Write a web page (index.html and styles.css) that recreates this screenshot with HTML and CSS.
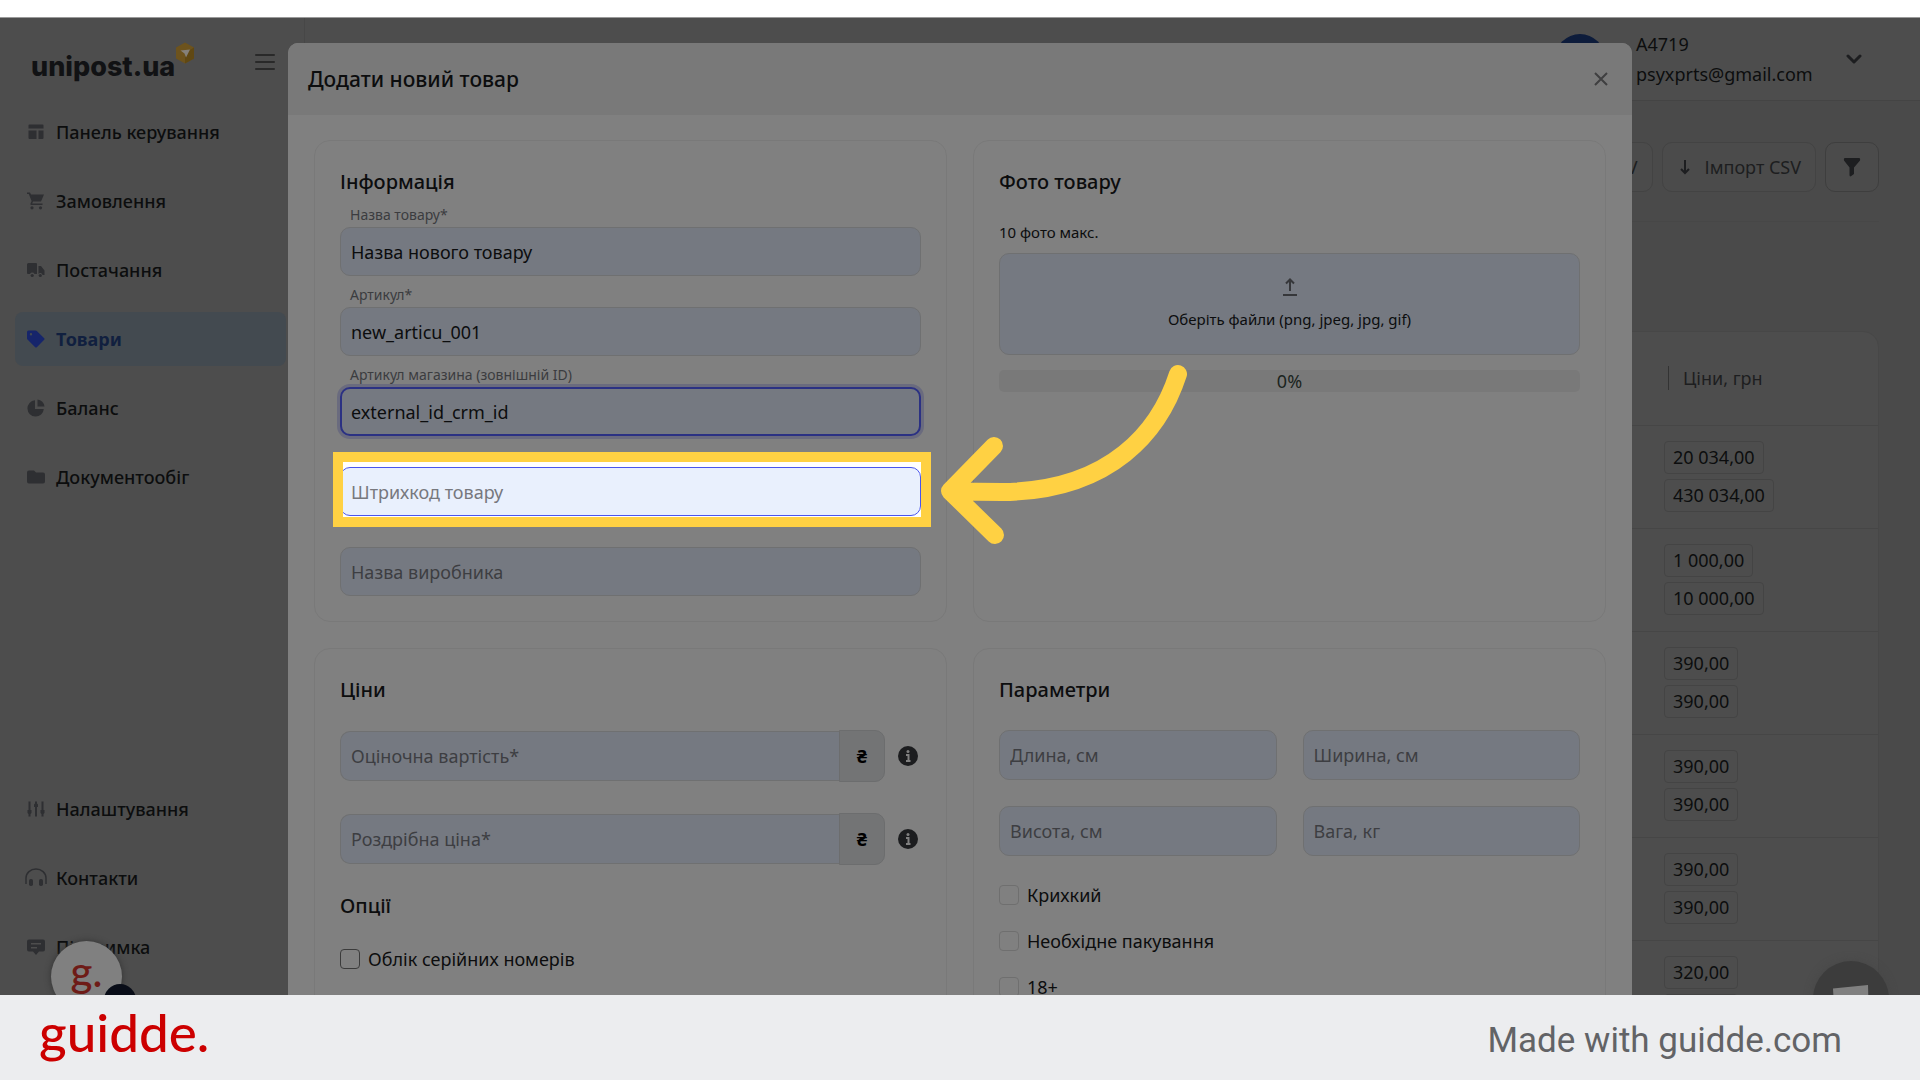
FILE: index.html
```html
<!DOCTYPE html>
<html lang="uk">
<head>
<meta charset="utf-8">
<meta name="viewport" content="width=device-width, initial-scale=1">
<title>Додати новий товар</title>
<link rel="stylesheet" href="styles.css">
</head>
<body>
<div class="stage">
  <div class="app">
    <aside class="sidebar">
      <div class="brand">
        <a class="brand-name" href="#">unipost.ua<svg class="brand-mark" viewBox="0 0 20 22" width="20" height="22"><path d="M10 0.500 19 5.500V16.500L10 21.500 1 16.500V5.500Z" fill="#6d531d"/><path d="M10 11 19 5.500V16.500L10 21.500Z" fill="#604813"/><path d="M5.500 8.500 15 7.500 11 15.500 9.500 11.500Z" fill="#85817a"/></svg></a>
        <button class="icon-btn" type="button" aria-label="Меню"><svg viewBox="0 0 20 18" width="20" height="18" stroke="#292929" stroke-width="2" stroke-linecap="round"><path d="M1 2H19M1 9H19M1 16H19"/></svg></button>
      </div>
      <nav class="menu">
        <a class="menu-item" href="#"><svg viewBox="0 0 18 18"><path d="M2.500 1.500H15.500Q16.500 1.500 16.500 2.500V5.500H1.500V2.500Q1.500 1.500 2.500 1.500ZM1.500 7.500H9.500V16H2.500Q1.500 16 1.500 15ZM11.500 7.500H16.500V15Q16.500 16 15.500 16H11.500Z"/></svg>Панель керування</a>
        <a class="menu-item" href="#"><svg viewBox="0 0 18 18"><path d="M0 0.500H3L4 2.500H17L14 9.500H6L5.200 11.500H15.500V13H4Q3 12.500 3.500 11.500L4.600 9 1.800 2H0Z"/><circle cx="5" cy="15.800" r="1.600"/><circle cx="13.500" cy="15.800" r="1.600"/></svg>Замовлення</a>
        <a class="menu-item" href="#"><svg viewBox="0 0 18 18"><path d="M1.500 2H9Q10 2 10 3V13H7.500A2.500 2.500 0 0 0 3 13H1Q0 13 0 12V3.500Q0 2 1.500 2ZM11.500 5H14L17.500 9.500V14H15.500A2.200 2.200 0 0 0 11.500 13Z"/><circle cx="5.200" cy="14.500" r="1.600"/><circle cx="13.300" cy="14.500" r="1.600"/></svg>Постачання</a>
        <a class="menu-item active" href="#"><svg viewBox="0 0 18 18"><path fill-rule="evenodd" d="M1.500 0.500H8.500Q9.200 0.500 9.800 1L17.200 8.200Q18 9 17.200 9.800L9.800 17.200Q9 18 8.200 17.200L1 10Q0 9.200 0 8.500V2Q0 0.500 1.500 0.500ZM4 3A1.200 1.200 0 1 0 4 5.400 1.200 1.200 0 0 0 4 3Z"/></svg>Товари</a>
        <a class="menu-item" href="#"><svg viewBox="0 0 18 18"><path d="M8 1.200V10H16.800A8.200 8.200 0 1 1 8 1.200ZM10.500 0.500A7.500 7.500 0 0 1 17.500 7.500H10.500Z"/></svg>Баланс</a>
        <a class="menu-item" href="#"><svg viewBox="0 0 18 18"><path d="M2 2.500H7L9 4.500H16Q18 4.500 18 6.500V13.500Q18 15.500 16 15.500H2Q0 15.500 0 13.500V4.500Q0 2.500 2 2.500Z"/></svg>Документообіг</a>
      </nav>
      <nav class="menu menu-bottom">
        <a class="menu-item" href="#"><svg viewBox="0 0 18 18"><path d="M1.500 1.500H3.500V10H4.500V13L3.500 14V16.500H1.500V14L0.500 13V10H1.500ZM8 1.500H10V3.500L11 4.500V7H10V16.500H8V7H7V4.500L8 3.500ZM14.500 1.500H16.500V10H17.500V13L16.500 14V16.500H14.500V14L13.500 13V10H14.500Z"/></svg>Налаштування</a>
        <a class="menu-item" href="#"><svg viewBox="0 0 18 18"><path d="M-1 15V9A10 9 0 0 1 19 9V15" fill="none" stroke="#2e2f32" stroke-width="1.500"/><rect x="2" y="10" width="4" height="7" rx="1.800"/><rect x="12" y="10" width="4" height="7" rx="1.800"/></svg>Контакти</a>
        <a class="menu-item" href="#"><svg viewBox="0 0 18 18"><path fill-rule="evenodd" d="M2 1.500H16Q18 1.500 18 3.500V11.500Q18 13.500 16 13.500H12L9 17 6 13.500H2Q0 13.500 0 11.500V3.500Q0 1.500 2 1.500ZM4 5V6.500H14V5ZM4 9V10.500H10V9Z"/></svg>Підтримка</a>
      </nav>
    </aside>

    <div class="content">
      <header class="topbar">
        <span class="avatar"></span>
        <div class="account"><span>A4719</span><span>psyxprts@gmail.com</span></div>
        <button class="icon-btn" type="button" aria-label="Меню акаунта"><svg viewBox="0 0 16 10" width="16" height="10" fill="none" stroke="#1d1e20" stroke-width="3" stroke-linecap="round" stroke-linejoin="round"><path d="M2 2 8 8 14 2"/></svg></button>
      </header>
      <main class="page">
        <div class="toolbar">
          <button class="tool" type="button">Експорт CSV</button>
          <button class="tool" type="button"><svg viewBox="0 0 10 16" width="10" height="16" fill="none" stroke="#1d1e20" stroke-width="2"><path d="M5 1V14M1 10 5 14 9 10"/></svg>Імпорт CSV</button>
          <button class="tool tool-filter" type="button" aria-label="Фільтр"><svg viewBox="0 0 18 20" width="18" height="20"><path d="M1.500 1H16.500Q17.500 1.500 17 3.500L11 10.500V17L7.500 19.500Q6.500 19 6.500 18V10.500L1 3.500Q0.500 1.500 1.500 1Z" fill="#1d1e20"/></svg></button>
        </div>
        <div class="table-card">
          <table class="goods">
            <thead><tr><td></td><th><span class="col-title">Ціни, грн</span></th></tr></thead>
            <tbody>
              <tr><td></td><td><span class="chip">20 034,00</span><span class="chip">430 034,00</span></td></tr>
              <tr><td></td><td><span class="chip">1 000,00</span><span class="chip">10 000,00</span></td></tr>
              <tr><td></td><td><span class="chip">390,00</span><span class="chip">390,00</span></td></tr>
              <tr><td></td><td><span class="chip">390,00</span><span class="chip">390,00</span></td></tr>
              <tr><td></td><td><span class="chip">390,00</span><span class="chip">390,00</span></td></tr>
              <tr><td></td><td><span class="chip">320,00</span><span class="chip">320,00</span></td></tr>
            </tbody>
          </table>
        </div>
      </main>
    </div>
  </div>

  <section class="modal" role="dialog" aria-labelledby="modal-title">
    <header class="modal-head">
      <h1 class="title title-main" id="modal-title">Додати новий товар</h1>
      <button class="icon-btn" type="button" aria-label="Закрити"><svg viewBox="0 0 14 14" width="14" height="14" stroke="#3f3f40" stroke-width="2"><path d="M1 1 13 13M13 1 1 13"/></svg></button>
    </header>
    <form class="cards">
      <section class="card">
        <h2 class="title">Інформація</h2>
        <label class="label" for="f-name">Назва товару*</label>
        <input class="input" id="f-name" type="text" value="Назва нового товару">
        <label class="label" for="f-sku">Артикул*</label>
        <input class="input" id="f-sku" type="text" value="new_articu_001">
        <label class="label" for="f-ext">Артикул магазина (зовнішній ID)</label>
        <input class="input focused" id="f-ext" type="text" value="external_id_crm_id">
        <div class="spot">
          <input class="input lit" type="text" placeholder="Штрихкод товару" aria-label="Штрихкод товару">
          <svg class="arrow" viewBox="0 0 280 200" width="280" height="200" fill="none" stroke="#ffd143" stroke-width="18" stroke-linecap="round" stroke-linejoin="round"><path d="M257 38C239 94 191 155 81 156Q55 156 30 155M73 110 29 155 74 199"/></svg>
        </div>
        <input class="input spaced" type="text" placeholder="Назва виробника" aria-label="Назва виробника">
      </section>

      <section class="card">
        <h2 class="title">Фото товару</h2>
        <p class="note">10 фото макс.</p>
        <button class="drop" type="button">
          <svg viewBox="0 0 16 18" width="16" height="18" fill="none" stroke="#36373a" stroke-width="2"><path d="M8 13V2M4 5.500 8 1.500 12 5.500M1 17H15"/></svg>
          Оберіть файли (png, jpeg, jpg, gif)
        </button>
        <div class="progress">0%</div>
      </section>

      <section class="card">
        <h2 class="title">Ціни</h2>
        <div class="prices">
          <div class="price">
            <input class="input" type="text" placeholder="Оціночна вартість*" aria-label="Оціночна вартість">
            <span class="unit">₴</span>
            <svg class="info" viewBox="0 0 20 20" width="20" height="20"><circle cx="10" cy="10" r="10" fill="#1c1d1f"/><circle cx="10" cy="5.500" r="1.500" fill="#808080"/><path d="M8 9H10.500V14.500M8 15H12.500" stroke="#808080" stroke-width="2" fill="none"/></svg>
          </div>
          <div class="price">
            <input class="input" type="text" placeholder="Роздрібна ціна*" aria-label="Роздрібна ціна">
            <span class="unit">₴</span>
            <svg class="info" viewBox="0 0 20 20" width="20" height="20"><circle cx="10" cy="10" r="10" fill="#1c1d1f"/><circle cx="10" cy="5.500" r="1.500" fill="#808080"/><path d="M8 9H10.500V14.500M8 15H12.500" stroke="#808080" stroke-width="2" fill="none"/></svg>
          </div>
        </div>
        <h2 class="title">Опції</h2>
        <div class="checks">
          <label class="check"><input class="box strong" type="checkbox">Облік серійних номерів</label>
        </div>
      </section>

      <section class="card">
        <h2 class="title">Параметри</h2>
        <div class="params">
          <input class="input" type="text" placeholder="Длина, см" aria-label="Длина, см">
          <input class="input" type="text" placeholder="Ширина, см" aria-label="Ширина, см">
          <input class="input" type="text" placeholder="Висота, см" aria-label="Висота, см">
          <input class="input" type="text" placeholder="Вага, кг" aria-label="Вага, кг">
        </div>
        <div class="checks">
          <label class="check"><input class="box" type="checkbox">Крихкий</label>
          <label class="check"><input class="box" type="checkbox">Необхідне пакування</label>
          <label class="check"><input class="box" type="checkbox">18+</label>
        </div>
      </section>
    </form>
  </section>

  <button class="bubble bubble-g" type="button">g.</button>
  <span class="bubble-count">?</span>
  <button class="bubble bubble-chat" type="button" aria-label="Чат"><svg viewBox="0 0 36 36" width="36" height="36"><path d="M0 3.500 35 0 36 36H2Z" fill="#808080"/></svg></button>
</div>

<footer class="footer">
  <a class="footer-logo" href="#">guidde.</a>
  <span class="footer-note">Made with guidde.com</span>
</footer>
</body>
</html>
```
FILE: styles.css
```css
*, *::before, *::after { box-sizing: border-box; }

body {
  margin: 0;
  height: 100vh;
  padding-top: 17px;
  display: flex;
  flex-direction: column;
  overflow: hidden;
  background: #fff;
  color: #0c0d0e;
  font: 18px/24px "Noto Sans", "Open Sans", sans-serif;
}

button, input { font: inherit; color: inherit; }
button { cursor: pointer; }
a { color: inherit; text-decoration: none; }
svg { flex: none; }

.stage {
  position: relative;
  flex: 1;
  min-height: 0;
  overflow: hidden;
  border-top: 1px solid #9a9a9a;
  background: #4a4a4a;
}

.app { display: flex; height: 100%; }

.icon-btn {
  display: flex;
  padding: 0;
  border: 0;
  background: none;
}

/* Sidebar */
.sidebar {
  flex: none;
  width: 305px;
  display: flex;
  flex-direction: column;
  padding: 0 18px 21px 15px;
  border-right: 1px solid #474747;
  background: #4d4d4d;
}

.brand {
  display: flex;
  align-items: center;
  justify-content: space-between;
  height: 87px;
  padding: 0 11px 0 16px;
}

.brand-name {
  position: relative;
  padding-top: 10px;
  color: #111214;
  font: 800 27px/40px Inter, sans-serif;
}

.brand-mark { position: absolute; left: 100%; top: 5px; }

.menu { display: flex; flex-direction: column; gap: 15px; }
.menu-bottom { margin-top: auto; }

.menu-item {
  display: flex;
  align-items: center;
  gap: 11px;
  height: 54px;
  padding-left: 12px;
  border-radius: 8px;
  font-weight: 500;
}

.menu-item svg { width: 18px; height: 18px; fill: #2e2f32; overflow: visible; }
.menu-item.active { background: #434a50; color: #11203f; font-weight: 700; }
.menu-item.active svg { fill: #16256b; }

/* Page behind the dialog */
.content { flex: 1; min-width: 0; display: flex; flex-direction: column; }

.topbar {
  flex: none;
  display: flex;
  justify-content: flex-end;
  align-items: center;
  height: 83px;
  padding-right: 58px;
  border-bottom: 1px solid #444;
  background: #4d4d4d;
}

.avatar { width: 50px; height: 50px; margin-right: 31px; border-radius: 50%; background: #0d1c3b; }
.account { display: flex; flex-direction: column; gap: 6px; width: 210px; }

.page { padding: 41px 41px 0 26px; }

.toolbar {
  display: flex;
  justify-content: flex-end;
  gap: 9px;
  padding-bottom: 29px;
  border-bottom: 1px solid #474747;
}

.tool {
  display: flex;
  align-items: center;
  gap: 15px;
  height: 50px;
  padding: 0 14px 0 17px;
  border: 1px solid #434343;
  border-radius: 10px;
  background: #4b4b4b;
  color: #1d1e20;
}

.tool-filter { padding: 0 17px; border-color: #3e3e3e; }

.table-card {
  margin-top: 109px;
  border: 1px solid #474747;
  border-radius: 16px;
  background: #4d4d4d;
}

.goods { width: 100%; border-collapse: collapse; }
.goods th, .goods td { padding: 0; border-bottom: 1px solid #464646; text-align: left; font-weight: 400; vertical-align: top; }
.goods tr > :last-child { width: 214px; }
.goods thead th { height: 93px; vertical-align: middle; }
.goods tbody td { height: 103px; padding-top: 15px; }

.col-title {
  display: block;
  margin-left: 4px;
  padding-left: 14px;
  border-left: 1px solid #333;
  color: #1d1e20;
}

.chip {
  display: block;
  width: fit-content;
  margin-bottom: 5px;
  padding: 4px 8px;
  border: 1px solid #444;
  border-radius: 4px;
  line-height: 23px;
}

/* Dialog */
.modal {
  position: absolute;
  top: 25px;
  left: 15%;
  right: 15%;
  border-radius: 10px;
  overflow: hidden;
  background: #808080;
}

.modal-head {
  display: flex;
  align-items: center;
  justify-content: space-between;
  height: 72px;
  padding: 0 24px 0 20px;
  background: #797979;
}

.title { margin: 0; font-size: 20px; line-height: 29px; font-weight: 500; }
.title-main { font-size: 21px; }

.cards {
  display: grid;
  grid-template-columns: 1fr 1fr;
  gap: 26px;
  padding: 25px 26px;
}

.card {
  min-width: 0;
  padding: 26px 25px 25px;
  border: 1px solid #797979;
  border-radius: 16px;
}

.label {
  display: block;
  height: 31px;
  padding: 9px 10px 2px;
  color: #3b3c3f;
  font-size: 14px;
  line-height: 20px;
}

.input {
  display: block;
  width: 100%;
  height: 49px;
  padding: 0 10px;
  border: 1px solid #6f7071;
  border-radius: 10px;
  outline: 0;
  background: #757981;
}

.input::placeholder { color: #3d3e42; opacity: 1; }
.input.focused { border: 2px solid #2b3183; box-shadow: 0 0 0 3px #6a6b7e; padding: 0 9px; }
.input.spaced { margin-top: 31px; }

/* Highlighted field */
.spot { position: relative; margin-top: 31px; }

.spot::before {
  content: "";
  position: absolute;
  inset: -5px -1px -1px 2px;
  background: #fff;
}

.spot::after {
  content: "";
  position: absolute;
  inset: -15px -10px -11px -7px;
  border: 10px solid #ffd143;
  pointer-events: none;
}

.input.lit { position: relative; border-color: #4a55ee; background: #e9f0fd; }
.input.lit::placeholder { color: #77787e; }

.arrow { position: absolute; left: 100%; top: -131px; z-index: 2; overflow: visible; pointer-events: none; }

.note { margin: 26px 0 10px; font-size: 15px; line-height: 21px; }

.drop {
  display: flex;
  flex-direction: column;
  align-items: center;
  justify-content: center;
  gap: 11px;
  width: 100%;
  height: 102px;
  border: 1px solid #6f7071;
  border-radius: 10px;
  background: #757981;
  font-size: 15px;
}

.progress {
  margin-top: 15px;
  border-radius: 5px;
  background: #797979;
  color: #1b2420;
  line-height: 22px;
  text-align: center;
}

.prices { display: grid; gap: 31px; margin: 26px 0; }
.price { display: flex; align-items: center; }
.price .input { flex: 1; min-width: 0; height: 50px; border-radius: 10px 0 0 10px; border-right: 0; }

.unit {
  width: 46px;
  padding: 13px 0;
  border: 1px solid #6c6d6e;
  border-radius: 0 10px 10px 0;
  background: #737475;
  color: #000;
  font-weight: 700;
  text-align: center;
}

.info { margin: 0 3px 0 13px; }

.params { display: grid; grid-template-columns: 1fr 1fr; gap: 26px; margin-top: 26px; }
.params .input { height: 50px; }

.checks { display: flex; flex-direction: column; gap: 22px; margin-top: 27px; }
.check { display: flex; align-items: center; gap: 8px; }

.box {
  appearance: none;
  width: 20px;
  height: 20px;
  margin: 0;
  border: 1px solid #6f6f6f;
  border-radius: 4px;
}

.box.strong { border-color: #3b3b3b; }

/* Floating widgets */
.bubble {
  position: absolute;
  display: flex;
  justify-content: center;
  padding: 0;
  border: 0;
  border-radius: 50%;
}

.bubble-g {
  left: 51px;
  bottom: -17px;
  width: 71px;
  height: 71px;
  background: #808080;
  box-shadow: 0 0 6px #333;
  color: #6e1b17;
  font: 500 42px/60px Lato, sans-serif;
}

.bubble-count {
  position: absolute;
  left: 104px;
  bottom: -21px;
  width: 32px;
  height: 32px;
  border-radius: 50%;
  background: #090d18;
  color: #808080;
  font-size: 15px;
  line-height: 32px;
  text-align: center;
}

.bubble-chat {
  right: 31px;
  bottom: -42px;
  width: 76px;
  height: 76px;
  padding-top: 24px;
  background: #3c3c3c;
  box-shadow: 0 0 8px #474747;
}

.footer {
  flex: none;
  display: flex;
  align-items: center;
  justify-content: space-between;
  height: 85px;
  padding: 0 78px 0 39px;
  background: #ecedef;
}

.footer-logo { padding-bottom: 12px; color: #c00; font: 500 53px/60px Lato, sans-serif; }
.footer-note { padding-top: 6px; color: #626366; font: 35px/40px Roboto, sans-serif; }
```
